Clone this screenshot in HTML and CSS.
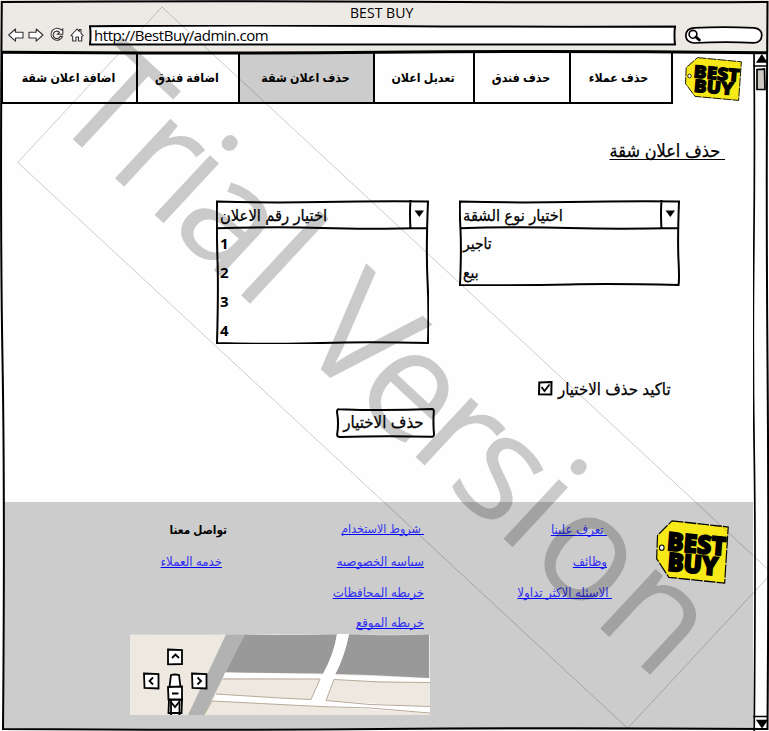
FILE: index.html
```html
<!DOCTYPE html>
<html lang="ar">
<head>
<meta charset="utf-8">
<title>BEST BUY</title>
<link rel="stylesheet" href="styles.css">
</head>
<body>
<svg class="defs" aria-hidden="true">
  <symbol id="tag" viewBox="0 0 57 44" preserveAspectRatio="none">
    <path d="M12.5 .6 56.4 4.8 53.6 43.4 10 39.4.5 26.6 1.2 10.6Z" fill="#f7e817" stroke="#000" stroke-width=".9" stroke-dasharray="9 1"/>
    <circle cx="4.5" cy="19" r="1.8" fill="#fff" stroke="#000" stroke-width=".8"/>
    <g transform="rotate(5 8 20)" class="tag-text">
      <text x="8.3" y="20.6" textLength="46" lengthAdjust="spacingAndGlyphs">BEST</text>
      <text x="9.8" y="34.6" textLength="39.5" lengthAdjust="spacingAndGlyphs">BUY</text>
    </g>
  </symbol>
</svg>
<div class="window">
  <header class="chrome">
    <h1 class="caption">BEST BUY</h1>
    <div class="toolbar">
      <svg class="icons" width="80" height="20" viewBox="0 0 80 20" fill="#fff" stroke="#333" stroke-width="1.1" stroke-linejoin="round">
        <path d="M.7 9 7.5 3v3.2H15V12H7.5v3.2Z"/>
        <path d="M35 9 28.2 3v3.2H21V12h7.2v3.2Z"/>
        <path d="M53.5 4.2A6 6 0 1 0 54.6 10.4H52.2A3.7 3.7 0 1 1 51.6 6.4L49.3 8.3H54.8V2.8Z"/>
        <path d="M63 9.5 69 3l2.3 2.4V3.6h1.7v3.8l2.2 2.2-1.5.9V15h-3.2v-4h-2.6v4h-3.2v-4.7Z"/>
      </svg>
      <div class="address">
        <svg class="frame" viewBox="0 0 586 21" preserveAspectRatio="none"><path d="M1 1.2Q150 0 290 1T585 1.5Q584 10 585 19.5 430 20 290 19.6T1 19.5Q2 10 1 1.2Z"/></svg>
        <span>http://BestBuy/admin.com</span>
      </div>
      <svg class="search" width="80" height="20" viewBox="0 0 80 20">
        <path d="M10 2.8Q40 1.500 70 2.8 77.500 3.500 77.800 10 77.500 17.500 70 17.800 40 16.500 10 18 2 17.500 1.8 10.500 2 3.500 10 2.800Z" fill="#fff" stroke="#000" stroke-width="1.7"/>
        <circle cx="9" cy="9.300" r="3.900" fill="none" stroke="#000" stroke-width="1.6"/>
        <path d="m12 12 3.300 3" stroke="#000" stroke-width="3" stroke-linecap="round"/>
      </svg>
    </div>
  </header>

  <div class="viewport">
    <main class="page">
      <div class="masthead">
        <nav class="tabs">
          <a class="tab w135">اضافة اعلان شقة</a>
          <a class="tab w102">اضافة فندق</a>
          <a class="tab w135 active">حذف اعلان شقة</a>
          <a class="tab w100">تعديل اعلان</a>
          <a class="tab w96">حذف فندق</a>
          <a class="tab w102">حذف عملاء</a>
        </nav>
        <svg class="logo" width="57" height="44"><use href="#tag" width="57" height="44"/></svg>
      </div>

      <h2 class="title">&nbsp;حذف اعلان شقة</h2>

      <div class="pickers">
        <div class="combo number">
          <svg class="frame" viewBox="0 0 213 144"><path d="M1 1.5Q50 3 106 2T212 1.5Q210 50 211.500 80T212 143Q150 141.500 106 143T1 143Q2.500 90 1.500 60T1 1.5ZM1 28.300Q60 26.500 106 28T212 28M194.500 0Q193.500 14 194.500 29"/><path class="arrow" d="m198.500 10.500h9.500l-4.700 6.500Z"/></svg>
          <div class="head">اختيار رقم الاعلان</div>
          <div class="option">1</div><div class="option">2</div><div class="option">3</div><div class="option">4</div>
        </div>
        <div class="combo kind">
          <svg class="frame" viewBox="0 0 221 86"><path d="M1 1.500Q50 3 110 2T220 1.500Q218.500 40 219.500 60T219.500 85Q150 83.500 110 84.500T1 85Q2.500 50 1.500 30T1 1.500ZM1 28.300Q60 26.500 110 28T220 28M202.500 0Q201.500 14 202.500 29"/><path class="arrow" d="m206.500 10.500h9.500l-4.700 6.500Z"/></svg>
          <div class="head">اختيار نوع الشقة</div>
          <div class="option">تاجير</div><div class="option">بيع</div>
        </div>
      </div>

      <label class="confirm">
        <svg width="15" height="15" viewBox="0 0 15 15" fill="none" stroke="#000" stroke-width="2"><path d="M1.300 1.500 13.500 1 13.300 13.500 1 13.300Z"/><path d="m3.500 6 3 4 5-6.500" stroke-width="1.800"/></svg>
        <span>تاكيد حذف الاختيار</span>
      </label>
      <div class="action">
        <svg class="frame" viewBox="0 0 99 30"><path d="M3 1.200Q50 3 96 1 98 1 97.800 4 97 15 98 26 98 29 95 28.800 50 27.500 4 29 .8 29 1.200 26 3 15 1 4 1 1 3 1.200Z"/></svg>
        <span>حذف الاختيار</span>
      </div>

      <footer class="footer">
        <div class="links">
          <b class="c1">تواصل معنا</b><a class="c2 snug">&nbsp;شروط الاستخدام</a><a class="c3">&nbsp;تعرف علينا</a>
          <a class="c1 in">خدمه العملاء</a><a class="c2">سياسه الخصوصيه</a><a class="c3">وظائف</a>
          <i></i><a class="c2">خريطه المحافظات</a><a class="c3 out">&nbsp;الاسئله الاكثر تداولا</a>
          <i></i><a class="c2">خريطه الموقع</a><i></i>
        </div>
        <svg class="logo" width="73" height="64"><use href="#tag" width="73" height="64"/></svg>
        <svg class="map" width="300" height="81" viewBox="0 0 300 81">
          <path d="M0 .5Q50 1 100 .5T200 1L300 .5V81H0Z" fill="#ede9e0"/>
          <path d="M114 .5Q160 1.500 207 .5 204 20 193 39.500L95 38.500Z" fill="#999"/>
          <path d="M219 .5Q260 2 299 .5V44L240 41 205 40Q215 20 219 .5Z" fill="#999"/>
          <path d="M96 .5H115L74 81H58Z" fill="#b2b2b2"/>
          <path d="M95 38.500 193 40.500Q204 20 207 0H219Q215 22 205 41L240 42 300 44.500V48.500L204 46 196 66.500 300 73V79L190 72.500 83 67 86 60.500 181 65.500 190 45 93 44Z" fill="#fff"/>
          <path d="M93 45H190L181 65.500 150 64 86 60M204 45.500 250 48 300 48.500M204 45.500 196 66.500 240 70.500 300 72.500M74 81 82 67 140 70 190 72.500 240 74 300 79" fill="none" stroke="#b8aa98" stroke-width="1"/>
          <g fill="#fff" stroke="#000" stroke-width="1.800">
            <path d="M38 15.500 52 16V30L38 30.300ZM14 39.500 28.500 40V54.500L14.500 54ZM62 39.500 76.500 40V54.500L62.500 54ZM41 41Q45 40 49 41L50.500 53H39.500ZM39 65.500H52L51.500 79H38.500Z"/>
            <path d="M38 53 52 52.500V65.500H38.500ZM41 65V81M49.500 65V81"/>
            <path d="m42 24 3.500-3.500 3.500 3.500M23 43.500 19.500 47l3.500 3.500M67.500 43.500 71 47l-3.500 3.500M42 59.500h6.500M41 68l4 5 4-5" fill="none"/>
          </g>
        </svg>
      </footer>
    </main>
    <aside class="scrollbar">
      <svg width="16" height="679" viewBox="0 0 16 679" fill="none" stroke="#000" stroke-width="1.700">
        <path d="M1 0Q2 100 .8 200T1.200 400 1.200 679M0 14H15M0 664.500H15"/>
        <path d="m4.500 10 4.300-6.500 4.300 6.500ZM4.500 668.500h9l-4.500 6.500Z" fill="#000"/>
        <path d="M4 17.500 11.500 17 12 37.500H4Z" fill="#ccc8c4"/>
      </svg>
    </aside>
  </div>

  <svg class="outline" width="769" height="731" viewBox="0 0 769 731">
    <path d="M1 2Q200 .8 400 1.800T767.500 2Q766 180 767.500 360T767.500 729Q560 727.500 380 729T3 729Q5 500 2.500 360T1.800 1.500"/>
    <path d="M2 52.300Q200 53.800 380 52.200T768 52.800" stroke-width="3"/>
  </svg>
  <svg class="watermark" width="769" height="731" viewBox="0 0 769 731">
    <g transform="translate(162 7) rotate(42.860)">
      <rect width="832" height="212"/>
      <text x="-11 69 123 154 241 285 324 401 479 531 599 640 731" y="157.500">Trial Version</text>
    </g>
  </svg>
</div>
</body>
</html>
```
FILE: styles.css
```css
* { box-sizing: border-box; }
body {
  margin: 0;
  font-family: "Open Sans", "DejaVu Sans Condensed", "DejaVu Sans", sans-serif;
  color: #000;
  overflow: hidden;
}
.defs { position: absolute; width: 0; height: 0; }
.tag-text { font: 800 17.5px "Open Sans", sans-serif; stroke: #000; stroke-width: 1.1; }
.window { position: relative; width: 769px; height: 731px; background: #fefefe; overflow: hidden; }

.chrome { height: 52px; background: #edeae5; }
.caption { margin: 0; padding: 3px 0 0 350px; height: 25px; font-size: 14px; font-weight: 400; line-height: 20px; letter-spacing: .05px; }
.toolbar { display: flex; padding-left: 8px; }
.icons { margin-top: 1px; }
.address { position: relative; width: 587px; height: 21px; margin-left: 1px; padding-left: 5px; background: #fff; font-size: 15px; line-height: 21px; letter-spacing: -.45px; }
.address span { position: relative; }
.search { margin-left: 8px; }
.frame { position: absolute; left: 0; top: 0; width: 100%; height: 100%; fill: none; stroke: #000; stroke-width: 2; }
.frame .arrow { fill: #000; stroke: none; }

.viewport { display: flex; height: 679px; }
.page { width: 753px; display: flex; flex-direction: column; }
.masthead { display: flex; height: 52px; padding-left: 1px; }
.tabs { display: flex; height: 52px; width: 672px; border: 2px solid #000; border-top-width: 1px; }
.tab {
  display: flex; align-items: center; justify-content: center;
  border-right: 2px solid #000; padding-right: 2px;
  font-size: 12.3px; font-weight: 700; direction: rtl; white-space: nowrap; flex: none;
}
.tab:last-child { border-right: 0; padding-right: 7px; }
.active { background: #ccc; }
.w135 { width: 135px; }
.w102 { width: 102px; }
.w100 { width: 100px; }
.w96 { width: 96px; }
.masthead .logo { margin: 5px 0 0 12px; }

.title {
  margin: 33px 28px 0 0; height: 26px; line-height: 26px; font-size: 18px; font-weight: 400; direction: rtl;
  text-decoration: underline; text-decoration-thickness: 1px; text-underline-offset: 2px; text-decoration-skip-ink: none;
}
.title, .head, .kind .option, .confirm, .action { -webkit-text-stroke: .25px #000; }

.pickers { display: flex; gap: 30px; margin: 37px 0 0 216px; height: 145px; align-items: flex-start; }
.combo { position: relative; padding-left: 4px; font-size: 16.4px; }
.number { width: 213px; height: 144px; }
.kind { width: 221px; height: 86px; }
.head { height: 29px; line-height: 29px; }
.option { height: 29px; line-height: 29px; }
.kind .option { font-size: 15.5px; }
.number .option { font-weight: 700; font-size: 15px; }

.confirm { display: flex; align-items: center; gap: 5px; margin: 31px 0 0 538px; height: 24px; font-size: 16.7px; white-space: nowrap; }
.action { position: relative; width: 99px; height: 30px; margin: 8px 0 0 336px; padding-right: 4px; text-align: center; font-size: 16.8px; line-height: 28px; white-space: nowrap; }

.footer {
  margin: 64px 0 0 4px; height: 228px; background: #ccc;
  display: grid; grid-template-columns: 608px 1fr; grid-template-rows: 132px 81px;
}
.links {
  display: grid; grid-template-columns: 223px 198px 187px; grid-template-rows: 32px 32px 29px 32px;
  padding-top: 11px; align-items: center; direction: ltr; font-size: 13.1px; line-height: 18px;
}
.links a, .links b { justify-self: end; direction: rtl; white-space: nowrap; }
.links a {
  color: #3030f0;
  text-decoration: underline 1px #00f; text-underline-offset: 1px; text-decoration-skip-ink: none;
}
.links b { font-size: 11.700px; }
.links .in { margin-right: 5px; }
.links .c2 { margin-right: 1px; }
.links .snug { font-size: 12.400px; }
.links .c3 { margin-right: 5px; }
.links .out { margin-right: 0; }
.footer .logo { margin: 18px 0 0 44px; }
.map { margin-left: 126px; }

.outline, .watermark { position: absolute; left: 0; top: 0; pointer-events: none; }
.outline { fill: none; stroke: #000; stroke-width: 2; }
.watermark { opacity: .2; }
.watermark rect { fill: none; stroke: #000; stroke-width: .9; }
.watermark text { font: 400 152px "Open Sans", sans-serif; }
```
